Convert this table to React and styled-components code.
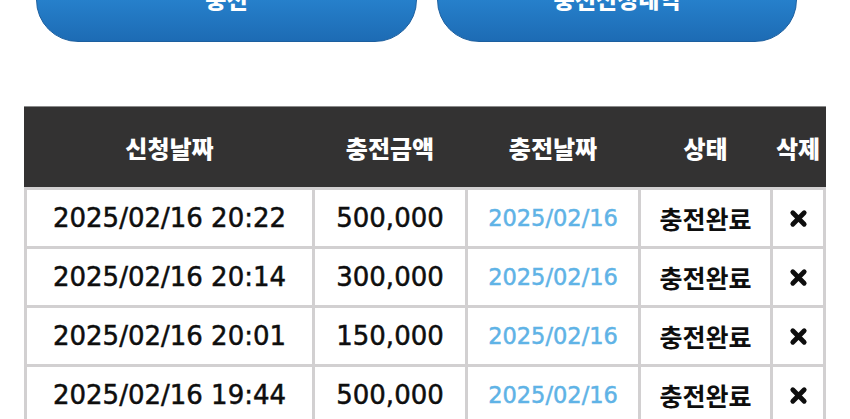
import styled, { createGlobalStyle } from "styled-components";

const GlobalStyle = createGlobalStyle`
  html, body {
    margin: 0;
    padding: 0;
    background: #ffffff;
    overflow: hidden;
  }
  body {
    font-family: "Noto Sans CJK KR", "Noto Sans", sans-serif;
  }
`;

const rows = [
  { applied: "2025/02/16 20:22", amount: "500,000", charged: "2025/02/16", status: "충전완료" },
  { applied: "2025/02/16 20:14", amount: "300,000", charged: "2025/02/16", status: "충전완료" },
  { applied: "2025/02/16 20:01", amount: "150,000", charged: "2025/02/16", status: "충전완료" },
  { applied: "2025/02/16 19:44", amount: "500,000", charged: "2025/02/16", status: "충전완료" },
];

const COLUMNS = "285px 150px 170px 129px 50px";

export default function App() {
  return (
    <Page>
      <GlobalStyle />
      <ButtonRow>
        <TabButton $width={381}>충전</TabButton>
        <TabButton $width={360}>충전신청내역</TabButton>
      </ButtonRow>

      <Table>
        <HeaderRow>
          <HeadCell>신청날짜</HeadCell>
          <HeadCell>충전금액</HeadCell>
          <HeadCell>충전날짜</HeadCell>
          <HeadCell>상태</HeadCell>
          <HeadCell>삭제</HeadCell>
        </HeaderRow>
        <Body>
          {rows.map((row, i) => (
            <Row key={i}>
              <Cell>{row.applied}</Cell>
              <Cell>{row.amount}</Cell>
              <Cell $tone="date">{row.charged}</Cell>
              <Cell $tone="status">{row.status}</Cell>
              <Cell>
                <DeleteIcon />
              </Cell>
            </Row>
          ))}
        </Body>
      </Table>
    </Page>
  );
}

function DeleteIcon() {
  return (
    <svg width="19" height="19" viewBox="0 0 19 19" aria-label="삭제">
      <path
        d="M3.8 3.8 L15.2 15.2 M15.2 3.8 L3.8 15.2"
        stroke="#0e0e0e"
        strokeWidth="4.8"
        strokeLinecap="round"
        fill="none"
      />
    </svg>
  );
}

const Page = styled.div`
  width: 850px;
  height: 419px;
  overflow: hidden;
`;

const ButtonRow = styled.div`
  display: flex;
  gap: 20px;
  padding-left: 36px;
  margin-top: -42px;
`;

const TabButton = styled.div`
  width: ${(p) => p.$width}px;
  height: 84px;
  box-sizing: border-box;
  border-radius: 44px;
  border: 1px solid #1c5f9f;
  background: linear-gradient(180deg, #2e8cd6 0%, #2680cb 50%, #1d6bb4 100%);
  color: #ffffff;
  font-size: 23px;
  font-weight: 900;
  display: flex;
  align-items: center;
  justify-content: center;
  padding-bottom: 4px;
`;

const Table = styled.div`
  margin: 64px 0 0 24px;
  width: 802px;
`;

const HeaderRow = styled.div`
  display: grid;
  grid-template-columns: ${COLUMNS};
  column-gap: 3px;
  padding: 0 3px;
  height: 81px;
  background: #333232;
  border-top: 1px solid #8a8a8a;
  box-sizing: border-box;
`;

const HeadCell = styled.div`
  display: flex;
  align-items: center;
  justify-content: center;
  color: #ffffff;
  font-size: 24px;
  font-weight: 900;
  white-space: nowrap;
`;

const Body = styled.div`
  display: grid;
  row-gap: 3px;
  padding: 3px;
  background: #d2d0d1;
`;

const Row = styled.div`
  display: grid;
  grid-template-columns: ${COLUMNS};
  column-gap: 3px;
  height: 56px;
`;

const Cell = styled.div`
  display: flex;
  align-items: center;
  justify-content: center;
  background: #ffffff;
  white-space: nowrap;
  font-family: ${(p) =>
    p.$tone === "status"
      ? `"Noto Sans CJK KR", sans-serif`
      : `"DejaVu Sans", "Noto Sans CJK KR", sans-serif`};
  font-size: ${(p) => (p.$tone === "date" ? "22.5px" : p.$tone === "status" ? "25px" : "26px")};
  font-weight: ${(p) => (p.$tone === "status" ? 700 : 400)};
  color: ${(p) => (p.$tone === "date" ? "#5fb3e6" : "#0e0e0e")};
  -webkit-text-stroke: ${(p) => (p.$tone === "status" ? "0" : "0.5px")};
`;
